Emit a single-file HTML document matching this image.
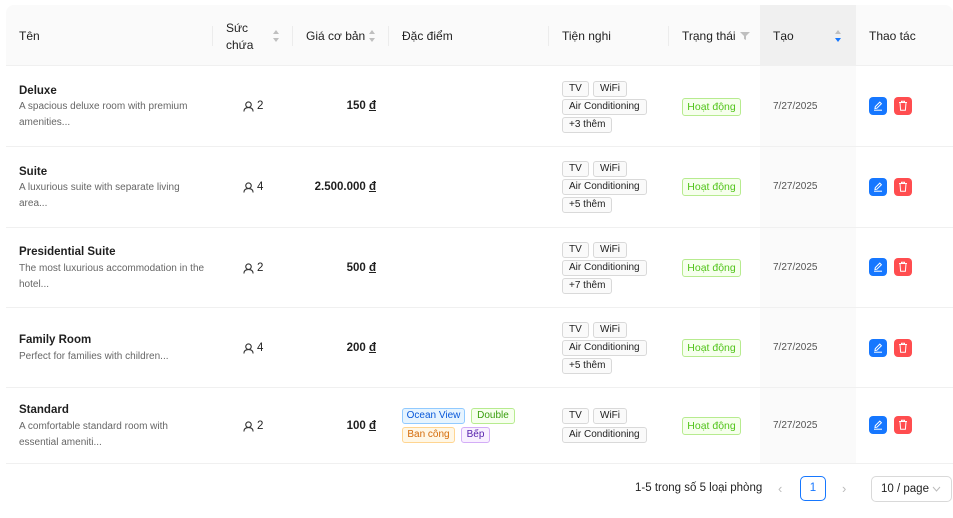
<!DOCTYPE html>
<html><head><meta charset="utf-8">
<style>
*{box-sizing:border-box;margin:0;padding:0}
body{width:953px;height:518px;background:#fff;font-family:"Liberation Sans","DejaVu Sans",sans-serif;color:rgba(0,0,0,.88);position:relative;overflow:hidden;font-size:12px}
.a{position:absolute}
.hd{position:absolute;left:6px;top:5px;width:947px;height:61px;background:#fafafa;border-radius:8px 8px 0 0;border-bottom:1px solid #f0f0f0}
.ht{position:absolute;font-size:12px;color:rgba(0,0,0,.88)}
.sep{position:absolute;top:26px;width:1px;height:20px;background:#ececec}
.sort{position:absolute;width:8px;height:14px}
.row{position:absolute;left:6px;width:947px;border-bottom:1px solid #f0f0f0}
.nm{position:absolute;left:19px;font-weight:bold;font-size:11.5px}
.ds{position:absolute;left:19px;font-size:10px;color:#666;line-height:16px;width:182px}
.pr{position:absolute;right:577px;font-weight:bold;font-size:11.5px}
.tg{position:absolute;height:16px;line-height:14px;font-size:10px;border:1px solid #d9d9d9;background:#fafafa;border-radius:3px;padding:0 6px;white-space:nowrap}
.st{position:absolute;left:682px;width:59px;text-align:center;height:18px;line-height:16px;font-size:10.5px;border:1px solid #b7eb8f;background:#f6ffed;color:#52c41a;border-radius:3px}
.dt{position:absolute;left:773px;font-size:10px;color:#555}
.tc{position:absolute;left:760px;width:96px;background:#fafafa}
.be{position:absolute;left:869px;width:18px;height:18px;background:#1677ff;border-radius:4px}
.bd{position:absolute;left:894px;width:18px;height:18px;background:#ff4d4f;border-radius:4px}
</style></head><body>
<div class="tc a" style="top:66px;height:397px"></div>
<div class="hd"></div>
<div class="a" style="left:760px;top:5px;width:96px;height:61px;background:#f0f0f0;border-bottom:1px solid #f0f0f0"></div>
<div class="ht" style="left:19px;top:29px">Tên</div>
<div class="sep" style="left:212px"></div>
<div class="ht" style="left:226px;top:20px;line-height:17px">Sức<br>chứa</div>
<svg class="sort" style="left:272px;top:29px" viewBox="0 0 8 14"><path d="M4 1L7 5H1z" fill="#bfbfbf"/><path d="M4 13L7 9H1z" fill="#bfbfbf"/></svg>
<div class="sep" style="left:292px"></div>
<div class="ht" style="left:306px;top:29px">Giá cơ bản</div>
<svg class="sort" style="left:368px;top:29px" viewBox="0 0 8 14"><path d="M4 1L7 5H1z" fill="#bfbfbf"/><path d="M4 13L7 9H1z" fill="#bfbfbf"/></svg>
<div class="sep" style="left:388px"></div>
<div class="ht" style="left:402px;top:29px">Đặc điểm</div>
<div class="sep" style="left:548px"></div>
<div class="ht" style="left:562px;top:29px">Tiện nghi</div>
<div class="sep" style="left:668px"></div>
<div class="ht" style="left:682px;top:29px">Trạng thái</div>
<svg class="a" style="left:740px;top:31px;width:10px;height:10px" viewBox="0 0 10 10"><path d="M0 1H10L6 5V9L4 8V5z" fill="#bfbfbf"/></svg>
<div class="ht" style="left:773px;top:29px">Tạo</div>
<svg class="sort" style="left:834px;top:29px" viewBox="0 0 8 14"><path d="M4 1L7 5H1z" fill="#bfbfbf"/><path d="M4 13L7 9H1z" fill="#1677ff"/></svg>
<div class="ht" style="left:869px;top:29px">Thao tác</div>

<div class="row" style="top:66px;height:81px"></div>
<div class="row" style="top:147px;height:81px"></div>
<div class="row" style="top:228px;height:80px"></div>
<div class="row" style="top:308px;height:80px"></div>
<div class="row" style="top:388px;height:76px"></div>

<div class="nm" style="top:85px">Deluxe</div>
<div class="ds" style="top:99px">A spacious deluxe room with premium amenities...</div>
<div class="pr" style="top:100px">150 <u>đ</u></div>
<div class="tg" style="left:562px;top:81px">TV</div><div class="tg" style="left:593px;top:81px">WiFi</div>
<div class="tg" style="left:562px;top:99px">Air Conditioning</div><div class="tg" style="left:562px;top:117px">+3 thêm</div>
<div class="st" style="top:98px">Hoạt động</div><div class="dt" style="top:101px">7/27/2025</div>
<div class="be" style="top:97px"></div><div class="bd" style="top:97px"></div>

<div class="nm" style="top:166px">Suite</div>
<div class="ds" style="top:180px">A luxurious suite with separate living area...</div>
<div class="pr" style="top:181px">2.500.000 <u>đ</u></div>
<div class="tg" style="left:562px;top:161px">TV</div><div class="tg" style="left:593px;top:161px">WiFi</div>
<div class="tg" style="left:562px;top:179px">Air Conditioning</div><div class="tg" style="left:562px;top:197px">+5 thêm</div>
<div class="st" style="top:178px">Hoạt động</div><div class="dt" style="top:181px">7/27/2025</div>
<div class="be" style="top:178px"></div><div class="bd" style="top:178px"></div>

<div class="nm" style="top:246px">Presidential Suite</div>
<div class="ds" style="top:261px;width:195px">The most luxurious accommodation in the hotel...</div>
<div class="pr" style="top:262px">500 <u>đ</u></div>
<div class="tg" style="left:562px;top:242px">TV</div><div class="tg" style="left:593px;top:242px">WiFi</div>
<div class="tg" style="left:562px;top:260px">Air Conditioning</div><div class="tg" style="left:562px;top:278px">+7 thêm</div>
<div class="st" style="top:259px">Hoạt động</div><div class="dt" style="top:262px">7/27/2025</div>
<div class="be" style="top:258px"></div><div class="bd" style="top:258px"></div>

<div class="nm" style="top:334px">Family Room</div>
<div class="ds" style="top:349px">Perfect for families with children...</div>
<div class="pr" style="top:342px">200 <u>đ</u></div>
<div class="tg" style="left:562px;top:322px">TV</div><div class="tg" style="left:593px;top:322px">WiFi</div>
<div class="tg" style="left:562px;top:340px">Air Conditioning</div><div class="tg" style="left:562px;top:358px">+5 thêm</div>
<div class="st" style="top:339px">Hoạt động</div><div class="dt" style="top:342px">7/27/2025</div>
<div class="be" style="top:339px"></div><div class="bd" style="top:339px"></div>

<div class="nm" style="top:404px">Standard</div>
<div class="ds" style="top:419px;width:172px">A comfortable standard room with essential ameniti...</div>
<div class="pr" style="top:420px">100 <u>đ</u></div>
<div class="tg" style="left:402px;top:408px;width:63px;padding:0;text-align:center;background:#e6f4ff;border-color:#91caff;color:#0958d9">Ocean View</div>
<div class="tg" style="left:471px;top:408px;width:44px;padding:0;text-align:center;background:#f6ffed;border-color:#b7eb8f;color:#389e0d">Double</div>
<div class="tg" style="left:402px;top:427px;width:53px;padding:0;text-align:center;background:#fff7e6;border-color:#ffd591;color:#d46b08">Ban công</div>
<div class="tg" style="left:461px;top:427px;width:29px;padding:0;text-align:center;background:#f9f0ff;border-color:#d3adf7;color:#531dab">Bếp</div>
<div class="tg" style="left:562px;top:408px">TV</div><div class="tg" style="left:593px;top:408px">WiFi</div>
<div class="tg" style="left:562px;top:427px">Air Conditioning</div>
<div class="st" style="top:417px">Hoạt động</div><div class="dt" style="top:420px">7/27/2025</div>
<div class="be" style="top:416px"></div><div class="bd" style="top:416px"></div>

<div id="icons"></div>
<script>
var tops=[100,181,262,342,420];
var h='';
var caps=['2','4','2','4','2'];
tops.forEach(function(t,i){
 h+='<svg class="a" style="left:243px;top:'+(t+1)+'px;width:11px;height:11px" viewBox="0 0 12 12"><circle cx="6" cy="4" r="3" fill="none" stroke="#333" stroke-width="1.2"/><path d="M1 11.5C1 8.5 3 7.2 6 7.2S11 8.5 11 11.5" fill="none" stroke="#333" stroke-width="1.2"/></svg><div class="a" style="left:257px;top:'+t+'px;font-size:11.5px">'+caps[i]+'</div>';
});
document.querySelectorAll('.be').forEach(function(e){e.innerHTML='<svg width="18" height="18" viewBox="0 0 18 18"><path d="M6 11.5L6.3 9.6L10.8 5.1L12.4 6.7L7.9 11.2Z" fill="none" stroke="#fff" stroke-width="1"/><path d="M5 13.2H13" stroke="#fff" stroke-width="1"/></svg>'});
document.querySelectorAll('.bd').forEach(function(e){e.innerHTML='<svg width="18" height="18" viewBox="0 0 18 18"><path d="M5 5.5H13M7.5 5.5V4.3H10.5V5.5M6 5.5L6.6 13.3H11.4L12 5.5" fill="none" stroke="#fff" stroke-width="1"/></svg>'});
document.getElementById('icons').innerHTML=h;
</script>

<div class="a" style="left:635px;top:482px;font-size:11.5px">1-5 trong số 5 loại phòng</div>
<div class="a" style="left:778px;top:481px;font-size:13px;color:#bbb">‹</div>
<div class="a" style="left:800px;top:476px;width:26px;height:25px;border:1px solid #1677ff;border-radius:5px;color:#1677ff;text-align:center;line-height:23px;font-size:11.5px">1</div>
<div class="a" style="left:842px;top:481px;font-size:13px;color:#bbb">›</div>
<div class="a" style="left:871px;top:476px;width:81px;height:26px;border:1px solid #d9d9d9;border-radius:5px;font-size:11.5px;line-height:24px;padding-left:9px">10 / page</div>
<svg class="a" style="left:932px;top:485px;width:9px;height:8px" viewBox="0 0 9 8"><path d="M1 2L4.5 6L8 2" fill="none" stroke="#bbb"/></svg>
</body></html>
